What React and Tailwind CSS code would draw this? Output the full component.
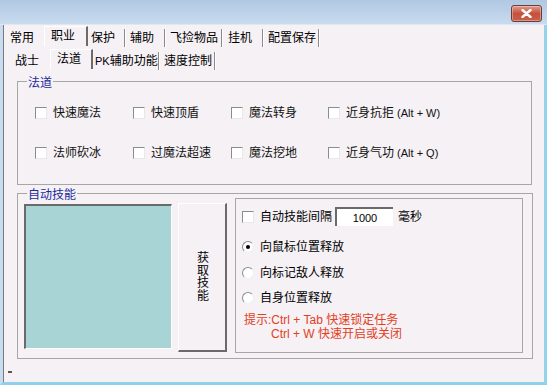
import { useState } from 'react'

const FONT = { fontFamily: '"Liberation Sans", "Noto Sans CJK SC", sans-serif' }

function Sep() {
  return <span className="ml-auto h-[18px] w-[2px] shrink-0 border-l border-l-[#8a8a8a] border-r border-r-white" />
}

function Tab({ label, width, pl, selected, sep, onClick }) {
  if (selected) {
    return (
      <div
        onClick={onClick}
        className="flex h-full shrink-0 items-start whitespace-nowrap border-l border-t border-l-white border-t-white border-r-2 border-r-[#6b6b6b] pt-[2px]"
        style={{ width }}
      >
        <span style={{ paddingLeft: pl }}>{label}</span>
      </div>
    )
  }
  return (
    <div onClick={onClick} className="flex h-full shrink-0 items-center whitespace-nowrap pt-[4px]" style={{ width }}>
      <span className="whitespace-nowrap" style={{ paddingLeft: pl }}>{label}</span>
      {sep && <Sep />}
    </div>
  )
}

function Checkbox({ checked }) {
  return (
    <span className="inline-block h-[12px] w-[12px] shrink-0 border border-t-[#8c8c8c] border-l-[#8c8c8c] border-b-[#e8e8e8] border-r-[#e8e8e8] bg-white">
      {checked && <span className="block text-[10px] leading-[10px]">✓</span>}
    </span>
  )
}

function Radio({ checked }) {
  return (
    <span className="relative inline-block h-[12px] w-[12px] shrink-0 rounded-full border border-t-[#8c8c8c] border-l-[#8c8c8c] border-b-[#f0f0f0] border-r-[#f0f0f0] bg-white">
      {checked && <span className="absolute left-[3px] top-[3px] h-[4px] w-[4px] rounded-full bg-black" />}
    </span>
  )
}

function CheckItem({ label, extra }) {
  return (
    <div className="flex items-center gap-[6px]">
      <Checkbox />
      <span className="whitespace-nowrap text-[#111]">
        {label}
        {extra && <span className="text-[11px]"> {extra}</span>}
      </span>
    </div>
  )
}

function Group({ title, className, children }) {
  return (
    <div className={`border border-[#a6a6a6] ${className}`}>
      <div className="-mt-[6px] ml-[9px] w-fit bg-[#f5f1f5] px-[1px] leading-[14px] text-[#1c2a9c]">{title}</div>
      {children}
    </div>
  )
}

export default function App() {
  const [top, setTop] = useState('职业')
  const [sub, setSub] = useState('法道')
  const [mode, setMode] = useState(0)

  const topTabs = [
    ['常用', 40, 6, false],
    ['职业', 44, 6, true],
    ['保护', 38, 3, true],
    ['辅助', 40, 4, true],
    ['飞捡物品', 57, 4, true],
    ['挂机', 41, 5, true],
    ['配置保存', 56, 4, true],
  ]
  const subTabs = [
    ['战士', 41, 6, false, '战士'],
    ['法道', 43, 6, true, '法道'],
    [<span><span className="text-[11px]">PK</span>辅助功能</span>, 66, 2, true, 'pk'],
    ['速度控制', 57, 5, true, '速度控制'],
  ]

  return (
    <div style={FONT} className="flex h-[385px] w-[547px] flex-col overflow-hidden bg-[#f5f1f5] text-[12px] leading-[14px] text-black">
      {/* title bar */}
      <div className="flex h-[25px] shrink-0 items-start justify-end border-b border-b-[#dfe8f2] bg-gradient-to-b from-[#b0c8e2] to-[#c9dbee] pr-[5px] pt-[5px]">
        <div className="flex h-[17px] w-[31px] items-center justify-center rounded-[3px] border border-[#6e3a36] bg-gradient-to-b from-[#e09a8c] via-[#c7503c] to-[#c5604a] shadow-[inset_0_0_0_1px_rgba(255,255,255,0.35)]">
          <svg width="11" height="9" viewBox="0 0 11 9">
            <path d="M1.5 1 L9.5 8 M9.5 1 L1.5 8" stroke="#fff" strokeWidth="2.4" strokeLinecap="round" />
          </svg>
        </div>
      </div>

      {/* body */}
      <div className="flex flex-1 flex-col border-l-[3px] border-l-[#c7dcee] border-r-[3px] border-r-[#93d3ec] border-b-[3px] border-b-[#8fd0ea]">
        <div className="flex flex-1 flex-col border-l border-l-[#7a7a7a]">
          {/* top tabs */}
          <div className="flex h-[21px] shrink-0 items-stretch pt-[1px]">
            {topTabs.map(([label, w, pl, sep]) => (
              <Tab key={label} label={label} width={w} pl={pl} sep={sep} selected={top === label} onClick={() => setTop(label)} />
            ))}
          </div>
          {/* sub tabs */}
          <div className="mt-[3px] flex h-[20px] shrink-0 items-stretch pl-[5px]">
            {subTabs.map(([label, w, pl, sep, key]) => (
              <Tab key={key} label={label} width={w} pl={pl} sep={sep} selected={sub === key} onClick={() => setSub(key)} />
            ))}
          </div>

          {/* 法道 group */}
          <Group title="法道" className="ml-[13px] mt-[12px] h-[104px] w-[515px]">
            <div className="grid grid-cols-[98px_98px_97px_1fr] gap-y-[26px] pl-[17px] pt-[16px]">
              <CheckItem label="快速魔法" />
              <CheckItem label="快速顶盾" />
              <CheckItem label="魔法转身" />
              <CheckItem label="近身抗拒" extra="(Alt + W)" />
              <CheckItem label="法师砍冰" />
              <CheckItem label="过魔法超速" />
              <CheckItem label="魔法挖地" />
              <CheckItem label="近身气功" extra="(Alt + Q)" />
            </div>
          </Group>

          {/* 自动技能 group */}
          <Group title="自动技能" className="ml-[13px] mt-[8px] h-[166px] w-[516px]">
            <div className="-mt-[4px] flex items-start pl-[6px]">
              <div className="mt-[6px] h-[145px] w-[148px] border-l-2 border-t-2 border-l-[#6a6a6a] border-t-[#6a6a6a] border-b border-r border-b-white border-r-white bg-[#a8d4d5]" />
              <button className="ml-[6px] mt-[5px] flex h-[149px] w-[49px] items-center justify-center border border-l-white border-t-white border-r-2 border-b-2 border-r-[#6a6a6a] border-b-[#6a6a6a] bg-[#f5f1f5]">
                <span className="w-[12px] pl-[1px] text-[12px] leading-[12.5px]">获取技能</span>
              </button>
              <div className="ml-[8px] flex h-[155px] w-[288px] flex-col border border-[#a6a6a6] pl-[6px]">
                <div className="mt-[8px] flex h-[19px] items-center">
                  <Checkbox />
                  <span className="ml-[6px]">自动技能间隔</span>
                  <div className="ml-[3px] flex h-[19px] w-[58px] items-center justify-center border-l-2 border-t-2 border-l-[#6a6a6a] border-t-[#6a6a6a] bg-white text-[11px]">1000</div>
                  <span className="ml-[5px]">毫秒</span>
                </div>
                {['向鼠标位置释放', '向标记敌人释放', '自身位置释放'].map((t, i) => (
                  <div
                    key={t}
                    onClick={() => setMode(i)}
                    className={`flex items-center gap-[6px] ${i === 0 ? 'mt-[14px]' : i === 1 ? 'mt-[12px]' : 'mt-[11px]'}`}
                  >
                    <Radio checked={mode === i} />
                    <span>{t}</span>
                  </div>
                ))}
                <div className="mt-[8px] pl-[2px] leading-[14px] text-[#e2401e]">
                  <div>提示:Ctrl + Tab 快速锁定任务</div>
                  <div className="pl-[27px]">Ctrl + W 快速开启或关闭</div>
                </div>
              </div>
            </div>
          </Group>

          <div className="ml-[4px] mt-[12px] h-[2px] w-[4px] bg-[#555]" />
        </div>
      </div>
    </div>
  )
}
